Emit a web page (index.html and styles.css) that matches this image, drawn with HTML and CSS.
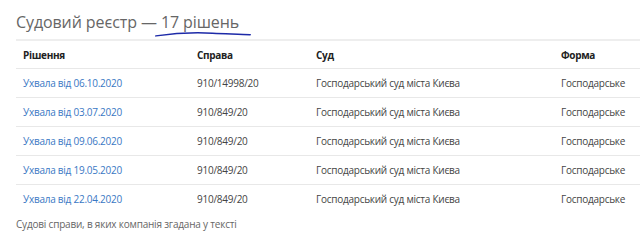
FILE: index.html
```html
<!DOCTYPE html>
<html lang="uk">
<head>
<meta charset="utf-8">
<link rel="stylesheet" href="styles.css">
</head>
<body>
<div class="wrap">
  <h2 class="title">Судовий реєстр — <span class="count">17 рішень<svg class="scribble" viewBox="0 0 100 8" preserveAspectRatio="none"><path d="M1 6.5 C 20 3, 45 2, 60 3 S 90 4, 99 5" fill="none" stroke="#1d2aa8" stroke-width="2" stroke-linecap="round"/></svg></span></h2>
  <table class="tbl">
    <colgroup><col class="c1"><col class="c2"><col class="c3"><col class="c4"></colgroup>
    <thead>
      <tr><th>Рішення</th><th>Справа</th><th>Суд</th><th>Форма</th></tr>
    </thead>
    <tbody>
      <tr><td><a href="#">Ухвала від 06.10.2020</a></td><td>910/14998/20</td><td>Господарський суд міста Києва</td><td>Господарське</td></tr>
      <tr><td><a href="#">Ухвала від 03.07.2020</a></td><td>910/849/20</td><td>Господарський суд міста Києва</td><td>Господарське</td></tr>
      <tr><td><a href="#">Ухвала від 09.06.2020</a></td><td>910/849/20</td><td>Господарський суд міста Києва</td><td>Господарське</td></tr>
      <tr><td><a href="#">Ухвала від 19.05.2020</a></td><td>910/849/20</td><td>Господарський суд міста Києва</td><td>Господарське</td></tr>
      <tr><td><a href="#">Ухвала від 22.04.2020</a></td><td>910/849/20</td><td>Господарський суд міста Києва</td><td>Господарське</td></tr>
    </tbody>
  </table>
  <p class="note">Судові справи, в яких компанія згадана у тексті</p>
</div>
</body>
</html>
```
FILE: styles.css
```css
html, body { margin: 0; padding: 0; background: #fff; }
body { font-family: "Open Sans", "Segoe UI", sans-serif; color: #444; overflow: hidden; }
.wrap { padding: 11px 0 0 16px; }
.title { margin: 0 0 5px 0; font-size: 16px; font-weight: 400; color: #666; line-height: 23px; letter-spacing: -0.1px; }
.count { position: relative; }
.scribble { position: absolute; left: -6px; bottom: -4px; width: 96px; height: 6px; }
.tbl { border-collapse: collapse; table-layout: fixed; width: 640px; font-size: 10px; letter-spacing: -0.25px; }
.c1 { width: 174px; } .c2 { width: 119px; } .c3 { width: 245px; } .c4 { width: 102px; }
.tbl thead tr { border-top: 2px solid #eee; }
.tbl th { text-align: left; font-weight: 700; color: #222; height: 27px; padding: 0 0 0 7px; border-bottom: 1px solid #e8e8e8; white-space: nowrap; letter-spacing: -0.3px; }
.tbl td { height: 28px; padding: 0 0 0 7px; border-bottom: 1px solid #e8e8e8; white-space: nowrap; overflow: hidden; color: #444; }
.tbl tbody tr:last-child td { border-bottom: none; }
.tbl a { color: #3a78c4; text-decoration: none; }
.note { margin: 4px 0 0 0; font-size: 10px; color: #666; letter-spacing: -0.2px; }
```
